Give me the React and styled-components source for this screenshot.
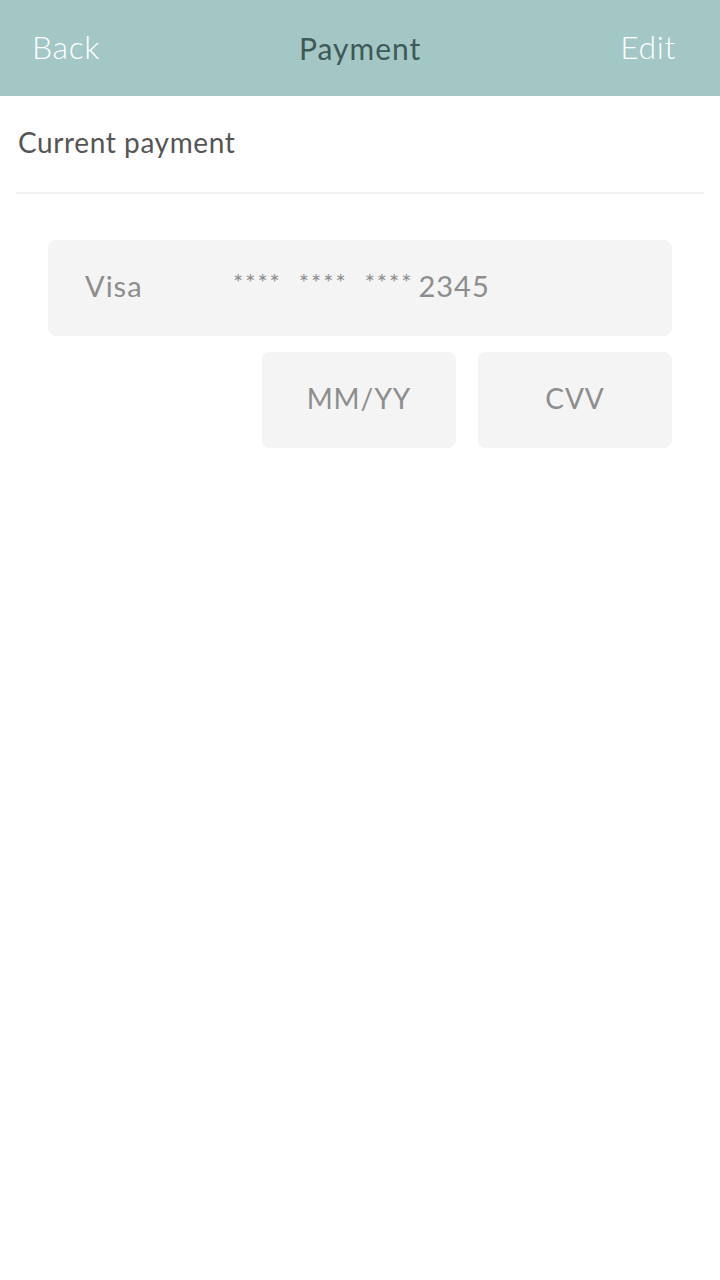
import React from 'react'
import styled, { createGlobalStyle } from 'styled-components'

const GlobalStyle = createGlobalStyle`
  html, body {
    margin: 0;
    padding: 0;
    background: #ffffff;
    font-family: Lato, "Open Sans", sans-serif;
  }
`

const Page = styled.div`
  width: 720px;
  min-height: 1280px;
  background: #ffffff;
`

const Header = styled.header`
  height: 96px;
  background-color: #a2c7c4;
  display: flex;
  align-items: center;
  justify-content: space-between;
  padding: 0 44px 4px 32px;
  box-sizing: border-box;
`

const NavLink = styled.span`
  color: #ffffff;
  font-size: 32px;
  font-weight: 300;
  letter-spacing: 0.6px;
`

const Title = styled.h1`
  margin: 4px 0 0;
  color: #3e5956;
  font-size: 30px;
  font-weight: 400;
  letter-spacing: 1px;
`

const Section = styled.div`
  padding: 0 16px;
`

const SectionTitle = styled.div`
  height: 98px;
  display: flex;
  align-items: center;
  padding: 0 0 4px 2px;
  color: #555555;
  font-size: 28px;
  letter-spacing: 0.6px;
  border-bottom: 2px solid #f0f0f0;
  box-sizing: border-box;
`

const Form = styled.div`
  padding: 46px 48px 0;
  display: flex;
  flex-direction: column;
  gap: 16px;
`

const Field = styled.div`
  height: 96px;
  background-color: #f4f4f4;
  border-radius: 8px;
  display: flex;
  align-items: center;
  justify-content: ${p => (p.$center ? 'center' : 'flex-start')};
  color: #8d8d8d;
  font-size: 29px;
  letter-spacing: 1px;
  box-sizing: border-box;
  padding: ${p => (p.$center ? '0 0 4px' : '0 0 5px 37px')};
`

const CardType = styled.span`
  width: 148px;
`

const Stars = styled.span`
  font-size: 24px;
  letter-spacing: 2px;
  margin-right: ${p => p.$gap}px;
  position: relative;
  top: -4px;
`

const Row = styled.div`
  display: flex;
  justify-content: flex-end;
  gap: 22px;
`

const SmallField = styled(Field)`
  width: 194px;
  font-size: 28px;
`

export default function App() {
  return (
    <Page>
      <GlobalStyle />
      <Header>
        <NavLink>Back</NavLink>
        <Title>Payment</Title>
        <NavLink>Edit</NavLink>
      </Header>
      <Section>
        <SectionTitle>Current payment</SectionTitle>
      </Section>
      <Form>
        <Field>
          <CardType>Visa</CardType>
          <Stars $gap={17}>****</Stars>
          <Stars $gap={17}>****</Stars>
          <Stars $gap={5}>****</Stars>
          <span>2345</span>
        </Field>
        <Row>
          <SmallField $center>MM/YY</SmallField>
          <SmallField $center>CVV</SmallField>
        </Row>
      </Form>
    </Page>
  )
}
